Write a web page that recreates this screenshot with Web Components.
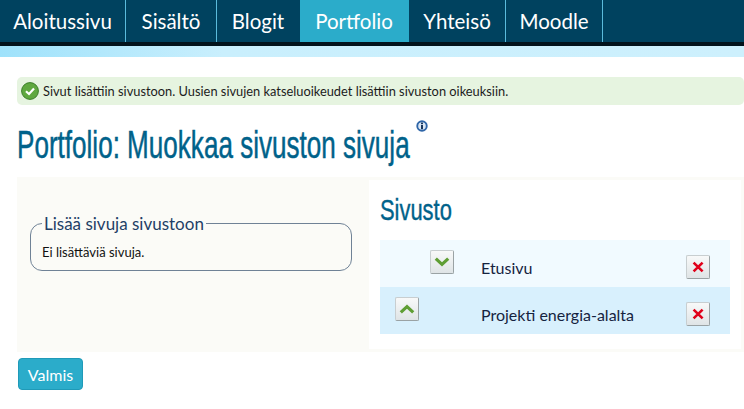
<!DOCTYPE html>
<html lang="fi">
<head>
<meta charset="utf-8">
<title>Portfolio</title>
<style>
  html, body { margin: 0; background: #fff; }
  body { font-family: Lato, "Liberation Sans", sans-serif; color: #111; width: 744px; height: 409px; overflow: hidden; }
</style>
</head>
<body>
<site-nav>
  <nav-tab>Aloitussivu</nav-tab>
  <nav-tab>Sisältö</nav-tab>
  <nav-tab plain>Blogit</nav-tab>
  <nav-tab active>Portfolio</nav-tab>
  <nav-tab>Yhteisö</nav-tab>
  <nav-tab>Moodle</nav-tab>
</site-nav>
<page-main>
  <ok-message>Sivut lisättiin sivustoon. Uusien sivujen katseluoikeudet lisättiin sivuston oikeuksiin.</ok-message>
  <page-title>Portfolio: Muokkaa sivuston sivuja</page-title>
  <edit-panel>
    <add-box slot="left" legend="Lisää sivuja sivustoon">Ei lisättäviä sivuja.</add-box>
    <site-list slot="right" heading="Sivusto">
      <page-row move="down">Etusivu</page-row>
      <page-row move="up" alt>Projekti energia-alalta</page-row>
    </site-list>
  </edit-panel>
  <done-button>Valmis</done-button>
</page-main>

<script>
const icons = {
  down: '<path d="M5.8 8.6l6.2 5.8 6.2-5.8" fill="none" stroke="#5f9e34" stroke-width="3.2"/>',
  up: '<path d="M5.8 15.4l6.2-5.8 6.2 5.8" fill="none" stroke="#5f9e34" stroke-width="3.2"/>',
  del: '<path d="M7.6 7.6l9 8.8M16.6 7.6l-9 8.8" fill="none" stroke="#e0001a" stroke-width="2.6"/>',
};

class SiteNav extends HTMLElement {
  constructor() {
    super();
    this.attachShadow({ mode: "open" }).innerHTML = `
    <style>
      :host { display: block; }
      .bar {
        display: grid; grid-template-columns: 126px 91px 83px 109px 97px 97px; height: 42px;
        background: #00425f; border-bottom: 4px solid #02131c;
      }
      .strip { height: 11px; background: linear-gradient(to right, #9fe2fb, #c9effd 30%, #cdf0fd); }
    </style>
    <div class="bar"><slot></slot></div>
    <div class="strip"></div>`;
  }
}
customElements.define("site-nav", SiteNav);

class NavTab extends HTMLElement {
  constructor() {
    super();
    this.attachShadow({ mode: "open" }).innerHTML = `
    <style>
      :host {
        display: flex; align-items: center; justify-content: center; height: 42px; box-sizing: border-box;
        color: #fff; font-size: 20.5px; border-right: 1px solid #5bbbdc;
      }
      :host([plain]) { border-right-color: transparent; }
      :host([active]) { background: #2bacca; border-right-color: #2bacca; }
    </style>
    <slot></slot>`;
  }
}
customElements.define("nav-tab", NavTab);

class PageMain extends HTMLElement {
  constructor() {
    super();
    this.attachShadow({ mode: "open" }).innerHTML = `
    <style>
      :host { display: block; padding: 20px 0 0 17px; }
    </style>
    <slot></slot>`;
  }
}
customElements.define("page-main", PageMain);

class OkMessage extends HTMLElement {
  constructor() {
    super();
    this.attachShadow({ mode: "open" }).innerHTML = `
    <style>
      :host {
        display: flex; align-items: center; gap: 4px; height: 28px; padding-left: 4px;
        background: #e6f4e0; border-radius: 5px; font-size: 12.83px; color: #1c1c1c;
      }
      svg { flex: none; }
    </style>
    <svg width="18" height="18" viewBox="0 0 18 18">
      <circle cx="9" cy="9" r="8.4" fill="#5fa83f" stroke="#3c7f2a" stroke-width="1"/>
      <path d="M5 9.3 8 12l5-5.5" fill="none" stroke="#fff" stroke-width="2.2"/>
    </svg>
    <span><slot></slot></span>`;
  }
}
customElements.define("ok-message", OkMessage);

class PageTitle extends HTMLElement {
  constructor() {
    super();
    this.attachShadow({ mode: "open" }).innerHTML = `
    <style>
      :host { display: flex; height: 46px; margin: 17px 0 9px; }
      h1 {
        margin: 0; font: 400 38px/46px "Liberation Sans", sans-serif; color: #00628a;
        -webkit-text-stroke: .5px #00628a;
        white-space: nowrap; transform: scaleX(.686); transform-origin: left; width: 393px;
      }
      svg { margin: -2px 0 0 6px; flex: none; }
    </style>
    <h1><slot></slot></h1>
    <svg width="12" height="12" viewBox="0 0 12 12">
      <circle cx="6" cy="6" r="5.7" fill="#2f66a8"/>
      <circle cx="6" cy="6" r="3.8" fill="#dbe7f4"/>
      <rect x="5" y="5" width="2" height="4.2" fill="#17365d"/>
      <rect x="5" y="2.6" width="2" height="1.6" fill="#17365d"/>
    </svg>`;
  }
}
customElements.define("page-title", PageTitle);

class EditPanel extends HTMLElement {
  constructor() {
    super();
    this.attachShadow({ mode: "open" }).innerHTML = `
    <style>
      :host {
        display: grid; grid-template-columns: 352px 1fr; height: 175px;
        background: #fbfbf7; box-sizing: border-box; padding: 3px 3px 3px 0;
      }
      .left { padding: 43px 17px 0 13px; }
      .right { background: #fff; padding: 0 11px 0 11px; }
    </style>
    <div class="left"><slot name="left"></slot></div>
    <div class="right"><slot name="right"></slot></div>`;
  }
}
customElements.define("edit-panel", EditPanel);

class AddBox extends HTMLElement {
  constructor() {
    super();
    this.attachShadow({ mode: "open" }).innerHTML = `
    <style>
      :host { display: block; position: relative; }
      .box {
        height: 48px; box-sizing: border-box; padding: 20px 11px 0;
        border: 1px solid #6f8296; border-radius: 12px; font-size: 13px; line-height: 16px; color: #111;
      }
      .legend {
        position: absolute; left: 12px; top: -8px; padding: 0 2px; background: #fbfbf7;
        font-size: 17px; line-height: 18px; color: #1f3f66;
      }
    </style>
    <div class="legend"></div>
    <div class="box"><slot></slot></div>`;
    this.shadowRoot.querySelector(".legend").textContent = this.getAttribute("legend");
  }
}
customElements.define("add-box", AddBox);

class SiteList extends HTMLElement {
  constructor() {
    super();
    this.attachShadow({ mode: "open" }).innerHTML = `
    <style>
      :host { display: block; }
      h2 {
        margin: 0; height: 60px; font: 400 30px/60px "Liberation Sans", sans-serif; color: #00628a;
        -webkit-text-stroke: .4px #00628a;
        transform: scaleX(.73); transform-origin: left; white-space: nowrap;
      }
    </style>
    <h2></h2>
    <slot></slot>`;
    this.shadowRoot.querySelector("h2").textContent = this.getAttribute("heading");
  }
}
customElements.define("site-list", SiteList);

class IconButton extends HTMLElement {
  constructor() {
    super();
    const name = this.getAttribute("icon");
    this.attachShadow({ mode: "open" }).innerHTML = `
    <style>
      :host {
        display: block; width: 24px; height: 24px;
        box-sizing: border-box; background: linear-gradient(#f8f9f9, #dfe4e6);
        border: 1px solid #c8ced0; border-right-color: #9aa2a4; border-bottom-color: #9aa2a4;
        border-radius: 2px;
      }
      svg { display: block; margin: -1px; }
    </style>
    <svg width="24" height="24" viewBox="0 0 24 24">${icons[name]}</svg>`;
  }
}
customElements.define("icon-button", IconButton);

class PageRow extends HTMLElement {
  constructor() {
    super();
    const move = this.getAttribute("move");
    this.attachShadow({ mode: "open" }).innerHTML = `
    <style>
      :host {
        display: grid; grid-template-columns: 101px 1fr 24px; height: 47px; padding-right: 20px;
        background: #f1faff; font-size: 16px; color: #15233f; box-sizing: border-box;
      }
      :host([alt]) { background: #d8f0fd; }
      .move { padding: 10px 0 0 50px; }
      :host([move="up"]) .move { padding-left: 15px; }
      .name { padding-top: 19px; line-height: 18px; }
      .del { padding-top: 15px; }
    </style>
    <div class="move"><icon-button icon="${move}"></icon-button></div>
    <div class="name"><slot></slot></div>
    <div class="del"><icon-button icon="del"></icon-button></div>`;
  }
}
customElements.define("page-row", PageRow);

class DoneButton extends HTMLElement {
  constructor() {
    super();
    this.attachShadow({ mode: "open" }).innerHTML = `
    <style>
      :host { display: block; margin-top: 6px; }
      button {
        display: block; width: 65px; height: 32px; margin-left: 1px; padding: 0;
        background: #2bacca; border: 1px solid #1f9ab8; border-radius: 4px;
        color: #fff; font: 16px Lato, "Liberation Sans", sans-serif;
      }
    </style>
    <button><slot></slot></button>`;
  }
}
customElements.define("done-button", DoneButton);
</script>
</body>
</html>
